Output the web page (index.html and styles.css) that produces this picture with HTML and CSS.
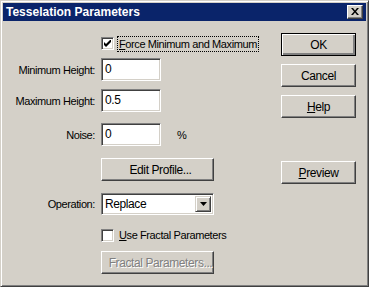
FILE: index.html
```html
<!DOCTYPE html>
<html>
<head>
<meta charset="utf-8">
<link rel="stylesheet" href="styles.css">
</head>
<body>
<div class="dialog">
  <div class="titlebar">
    <span class="title">Tesselation Parameters</span>
    <span class="close"><svg width="8" height="7" viewBox="0 0 8 7"><path d="M0 0h2l2 2.5L6 0h2L5 3.5 8 7H6L4 4.5 2 7H0l3-3.5z" fill="#000"/></svg></span>
  </div>
  <div class="body">
    <div class="form">
      <div class="row r1">
        <span class="lbl"></span>
        <span class="check checked"><svg width="7" height="7" viewBox="0 0 7 7"><path d="M0 2v3l2 2 5-5V-1L2 4z" fill="#000"/></svg></span>
        <span class="ctext focus"><u>F</u>orce Minimum and Maximum</span>
      </div>
      <div class="row r2">
        <span class="lbl">Minimum Height:</span>
        <span class="edit">0</span>
      </div>
      <div class="row r3">
        <span class="lbl">Maximum Height:</span>
        <span class="edit">0.5</span>
      </div>
      <div class="row r4">
        <span class="lbl">Noise:</span>
        <span class="edit">0</span>
        <span class="pct">%</span>
      </div>
      <div class="row r5">
        <span class="lbl"></span>
        <span class="btn wide">Edit Profile...</span>
      </div>
      <div class="row r6">
        <span class="lbl">Operation:</span>
        <span class="select"><span class="sel-text">Replace</span><span class="arrow"><svg width="7" height="4" viewBox="0 0 7 4"><path d="M0 0h7L3.5 4z" fill="#000"/></svg></span></span>
      </div>
      <div class="row r7">
        <span class="lbl"></span>
        <span class="check"></span>
        <span class="ctext"><u>U</u>se Fractal Parameters</span>
      </div>
      <div class="row r8">
        <span class="lbl"></span>
        <span class="btn wide disabled">Fractal Parameters...</span>
      </div>
    </div>
    <div class="buttons">
      <span class="btn default">OK</span>
      <span class="btn b-cancel">Cancel</span>
      <span class="btn b-help"><u>H</u>elp</span>
      <span class="btn b-preview"><u>P</u>review</span>
    </div>
  </div>
</div>
</body>
</html>
```
FILE: styles.css
```css
html, body {
  margin: 0;
  padding: 0;
  background: #d4d0c8;
}
.dialog {
  width: 369px;
  height: 287px;
  box-sizing: border-box;
  background: #d4d0c8;
  border: 1px solid;
  border-color: #d4d0c8 #404040 #404040 #d4d0c8;
  box-shadow: inset 1px 1px #fff, inset -1px -1px #808080;
  padding: 2px;
  font-family: "Liberation Sans", Arial, sans-serif;
  font-size: 11px;
  letter-spacing: -0.4px;
  color: #000;
}
.titlebar {
  height: 18px;
  background: #0a246a;
  display: flex;
  align-items: center;
  justify-content: space-between;
  padding: 0 3px 0 3px;
}
.title {
  color: #fff;
  font-weight: bold;
  font-size: 12px;
  letter-spacing: 0;
}
.close {
  width: 16px;
  height: 14px;
  box-sizing: border-box;
  background: #d4d0c8;
  border: 1px solid;
  border-color: #fff #404040 #404040 #fff;
  box-shadow: inset -1px -1px #808080;
  display: flex;
  align-items: center;
  justify-content: center;
  padding: 0 1px 1px 0;
}
.body {
  display: flex;
}
.form {
  width: 278px;
  display: flex;
  flex-direction: column;
  padding-top: 14px;
}
.row {
  display: flex;
  align-items: center;
}
.lbl {
  width: 98px;
  flex: none;
  box-sizing: border-box;
  text-align: right;
  padding-right: 6px;
}
.r1 { height: 17px; }
.r2 { margin-top: 6px; }
.r3 { margin-top: 8px; }
.r4 { margin-top: 11px; }
.r5 { margin-top: 12px; }
.r6 { margin-top: 12px; }
.r7 { margin-top: 12px; height: 16px; }
.r8 { margin-top: 8px; }
.check {
  width: 13px;
  height: 13px;
  box-sizing: border-box;
  background: #fff;
  border: 1px solid;
  border-color: #808080 #fff #fff #808080;
  box-shadow: inset 1px 1px #404040, inset -1px -1px #d4d0c8;
  display: flex;
  align-items: center;
  justify-content: center;
  margin-right: 3px;
  flex: none;
}
.ctext {
  padding: 1px 1px;
  border: 1px solid transparent;
}
.ctext.focus {
  border: 1px dotted #000;
}
.edit {
  width: 60px;
  height: 23px;
  box-sizing: border-box;
  background: #fff;
  border: 1px solid;
  border-color: #808080 #fff #fff #808080;
  box-shadow: inset 1px 1px #404040, inset -1px -1px #d4d0c8;
  padding: 3px 0 0 3px;
  font-size: 12px;
  flex: none;
}
.pct {
  margin-left: 16px;
}
.btn {
  width: 75px;
  height: 23px;
  box-sizing: border-box;
  background: #d4d0c8;
  border: 1px solid;
  border-color: #fff #404040 #404040 #fff;
  box-shadow: inset -1px -1px #808080;
  display: flex;
  align-items: center;
  justify-content: center;
  font-size: 12px;
  flex: none;
}
.btn.wide {
  width: 113px;
  padding-left: 6px;
}
.btn.disabled {
  color: #808080;
  text-shadow: 1px 1px #fff;
}
.btn.default {
  border-color: #000;
  box-shadow: inset 1px 1px #fff, inset -1px -1px #808080, inset -2px -2px #808080;
}
.select {
  width: 113px;
  height: 22px;
  box-sizing: border-box;
  background: #fff;
  border: 1px solid;
  border-color: #808080 #fff #fff #808080;
  box-shadow: inset 1px 1px #404040, inset -1px -1px #d4d0c8;
  display: flex;
  align-items: center;
  justify-content: space-between;
  padding: 2px 2px 2px 3px;
  font-size: 12px;
}
.arrow {
  width: 16px;
  height: 16px;
  box-sizing: border-box;
  background: #d4d0c8;
  border: 1px solid;
  border-color: #d4d0c8 #404040 #404040 #d4d0c8;
  box-shadow: inset 1px 1px #fff, inset -1px -1px #808080;
  display: flex;
  align-items: center;
  justify-content: center;
}
.buttons {
  display: flex;
  flex-direction: column;
  padding-top: 12px;
}
.b-cancel { margin-top: 8px; }
.b-help { margin-top: 8px; }
.b-preview { margin-top: 43px; }
```
